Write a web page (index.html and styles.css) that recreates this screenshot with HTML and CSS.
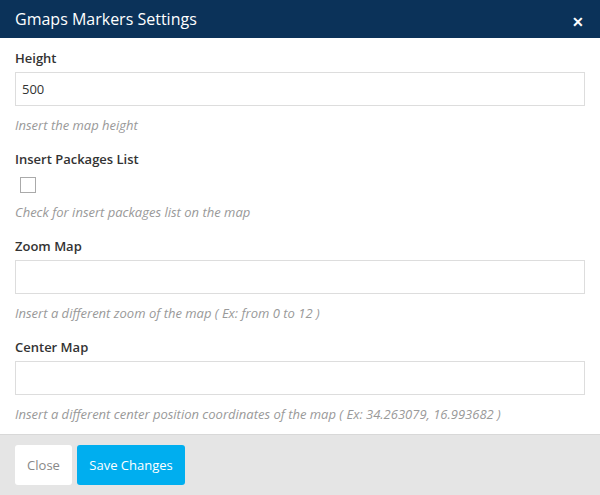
FILE: index.html
```html
<!DOCTYPE html>
<html>
<head>
<meta charset="utf-8">
<link rel="stylesheet" href="styles.css">
</head>
<body>
<div class="modal">
  <div class="modal-header">
    <h1 class="modal-title">Gmaps Markers Settings</h1>
    <span class="close-x">&#x2715;</span>
  </div>
  <div class="modal-body">
    <div class="field">
      <label class="label">Height</label>
      <div class="input">500</div>
      <p class="help">Insert the map height</p>
    </div>
    <div class="field">
      <label class="label">Insert Packages List</label>
      <div class="checkbox-row"><span class="checkbox"></span></div>
      <p class="help">Check for insert packages list on the map</p>
    </div>
    <div class="field">
      <label class="label">Zoom Map</label>
      <div class="input"></div>
      <p class="help">Insert a different zoom of the map ( Ex: from 0 to 12 )</p>
    </div>
    <div class="field">
      <label class="label">Center Map</label>
      <div class="input"></div>
      <p class="help">Insert a different center position coordinates of the map ( Ex: 34.263079, 16.993682 )</p>
    </div>
  </div>
  <div class="modal-footer">
    <button class="btn btn-close">Close</button>
    <button class="btn btn-save">Save Changes</button>
  </div>
</div>
</body>
</html>
```
FILE: styles.css
```css
* { box-sizing: border-box; }
html, body { margin: 0; padding: 0; background: #fff; }
body { font-family: "Open Sans", "Liberation Sans", sans-serif; color: #333; }
.modal { width: 600px; height: 495px; display: flex; flex-direction: column; overflow: hidden; }
.modal-header {
  height: 38px; flex: none; background: #0b3259; display: flex; align-items: center;
  justify-content: space-between; padding: 0 15px 0 15px;
}
.modal-title { margin: 0; font-size: 16px; font-weight: 400; color: #fff; line-height: 1; }
.close-x { color: #fff; font-size: 14px; font-weight: 700; margin-top: 4px; margin-right: 1px; }
.modal-body { flex: 1; min-height: 0; overflow: hidden; padding: 11px 15px 0 15px; }
.field { display: flex; flex-direction: column; }
.label { font-size: 13px; font-weight: 600; color: #333; line-height: 18px; margin-bottom: 5px; }
.input {
  height: 34px; border: 1px solid #ddd; font-size: 13px; color: #333;
  padding: 0 6px; display: flex; align-items: center;
}
.help { margin: 10px 0 16px; font-size: 13px; font-style: italic; color: #999; line-height: 18px; }
.checkbox-row { height: 20px; display: flex; align-items: flex-end; padding-left: 5px; }
.checkbox { width: 16px; height: 16px; border: 1px solid #aaa; background: #fff; display: block; }
.modal-footer {
  height: 61px; flex: none; background: #e5e5e5; border-top: 1px solid #d8d8d8;
  display: flex; gap: 5px; padding: 10px 15px 10px 15px;
}
.btn {
  font-family: "Open Sans", "Liberation Sans", sans-serif; font-size: 13px;
  height: 40px; border: none; border-radius: 3px; padding: 0; cursor: pointer;
}
.btn-close { background: #fff; color: #888; width: 57px; }
.btn-save { background: #00aeef; color: #fff; width: 108px; }
```
